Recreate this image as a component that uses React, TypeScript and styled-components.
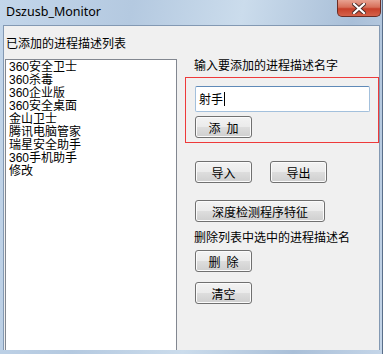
import styled, { createGlobalStyle } from "styled-components";

const GlobalStyle = createGlobalStyle`
  html, body {
    margin: 0;
    padding: 0;
    background: #ffffff;
  }
  body {
    font-family: "Liberation Sans", "Noto Sans CJK SC", sans-serif;
    font-size: 12px;
    color: #000;
  }
`;

const Window = styled.div`
  width: 383px;
  height: 354px;
  box-sizing: border-box;
  display: flex;
  flex-direction: column;
  background: linear-gradient(100deg, #c3d6ea 0%, #b4c9e0 30%, #cbdcec 55%, #a9bfd8 80%, #c4d5e8 100%);
  padding: 0 2px 4px 3px;
  border-right: 1px solid #5a6f8a;
`;

const TitleBar = styled.div`
  height: 25px;
  display: flex;
  align-items: flex-start;
  justify-content: space-between;
`;

const Title = styled.span`
  font-family: "Noto Sans", "Open Sans", sans-serif;
  font-size: 12.5px;
  line-height: 24px;
  padding-left: 3px;
  color: #000;
`;

const CloseButton = styled.div`
  width: 44px;
  height: 17px;
  margin-right: -1px;
  border: 1px solid #6b2d25;
  border-top: none;
  border-radius: 0 0 5px 5px;
  box-sizing: border-box;
  background: linear-gradient(#e8a291 0%, #d7705a 45%, #c7402a 55%, #d5624a 100%);
  display: flex;
  align-items: center;
  justify-content: center;
`;

const Client = styled.div`
  flex: 1;
  display: flex;
  background: #f0f0f0;
  border: 1px solid #8399b3;
  border-bottom: none;
  min-height: 0;
`;

const LeftColumn = styled.div`
  width: 174px;
  display: flex;
  flex-direction: column;
  padding-left: 1px;
`;

const Label = styled.div<{ $indent?: number }>`
  font-family: "Noto Sans CJK SC", sans-serif;
  font-size: 12px;
  line-height: 16px;
  padding-left: ${(p) => p.$indent ?? 0}px;
  white-space: nowrap;
`;

const ListHeader = styled(Label)`
  padding: 9px 0 8px 1px;
`;

const ListBox = styled.div`
  flex: 1;
  background: #ffffff;
  border: 1px solid #828790;
  border-bottom: none;
  padding: 1px 3px;
`;

const ListItem = styled.div`
  font-family: "Liberation Sans", "Noto Sans CJK SC", sans-serif;
  font-size: 12px;
  line-height: 13px;
  height: 13px;
  white-space: nowrap;
`;

const RightColumn = styled.div`
  flex: 1;
  display: flex;
  flex-direction: column;
  align-items: flex-start;
  padding: 31px 0 0 8px;
`;

const InputGroup = styled.div`
  margin-top: 4px;
  width: 194px;
  height: 66px;
  box-sizing: border-box;
  border: 1px solid #ee3a3a;
  padding: 8px 0 0 9px;
  display: flex;
  flex-direction: column;
  gap: 4px;
`;

const TextInput = styled.div`
  width: 175px;
  height: 26px;
  box-sizing: border-box;
  background: #ffffff;
  border: 1px solid #a3c0dc;
  border-top-color: #5f8ab8;
  border-radius: 2px;
  padding: 3px 3px;
  font-family: "Noto Sans CJK SC", sans-serif;
  font-size: 12px;
  line-height: 18px;
  display: flex;
  align-items: center;
`;

const Caret = styled.span`
  display: inline-block;
  width: 1px;
  height: 14px;
  background: #000;
  margin-left: 1px;
`;

const Button = styled.div<{ $width?: number }>`
  width: ${(p) => p.$width ?? 57}px;
  height: 22px;
  box-sizing: border-box;
  border: 1px solid #707070;
  border-radius: 3px;
  background: linear-gradient(#f3f3f3 0%, #ebebeb 48%, #dddddd 52%, #cfcfcf 100%);
  box-shadow: inset 0 0 0 1px #fbfbfb;
  font-family: "Noto Sans CJK SC", sans-serif;
  font-size: 12px;
  display: flex;
  align-items: center;
  justify-content: center;
  white-space: pre;
`;

const ButtonRow = styled.div<{ $top: number }>`
  display: flex;
  gap: 18px;
  margin: ${(p) => p.$top}px 0 0 10px;
`;

const DeleteLabel = styled(Label)`
  margin: 7px 0 0 9px;
`;

const items = [
  "360安全卫士",
  "360杀毒",
  "360企业版",
  "360安全桌面",
  "金山卫士",
  "腾讯电脑管家",
  "瑞星安全助手",
  "360手机助手",
  "修改",
];

function App() {
  return (
    <>
      <GlobalStyle />
      <Window>
        <TitleBar>
          <Title>Dszusb_Monitor</Title>
          <CloseButton>
            <svg width="14" height="11" viewBox="0 0 14 11">
              <path
                d="M2 1 L12 10 M12 1 L2 10"
                stroke="#4a2a26"
                strokeWidth="4"
                strokeLinecap="square"
              />
              <path
                d="M2 1 L12 10 M12 1 L2 10"
                stroke="#ffffff"
                strokeWidth="2.2"
                strokeLinecap="square"
              />
            </svg>
          </CloseButton>
        </TitleBar>
        <Client>
          <LeftColumn>
            <ListHeader>已添加的进程描述列表</ListHeader>
            <ListBox>
              {items.map((item) => (
                <ListItem key={item}>{item}</ListItem>
              ))}
            </ListBox>
          </LeftColumn>
          <RightColumn>
            <Label $indent={9}>输入要添加的进程描述名字</Label>
            <InputGroup>
              <TextInput>
                射手
                <Caret />
              </TextInput>
              <Button>{"添\u2002加"}</Button>
            </InputGroup>
            <ButtonRow $top={18}>
              <Button>导入</Button>
              <Button>导出</Button>
            </ButtonRow>
            <ButtonRow $top={17}>
              <Button $width={130}>深度检测程序特征</Button>
            </ButtonRow>
            <DeleteLabel>删除列表中选中的进程描述名</DeleteLabel>
            <ButtonRow $top={5}>
              <Button>{"删\u2002除"}</Button>
            </ButtonRow>
            <ButtonRow $top={10}>
              <Button>清空</Button>
            </ButtonRow>
          </RightColumn>
        </Client>
      </Window>
    </>
  );
}

export default App;
